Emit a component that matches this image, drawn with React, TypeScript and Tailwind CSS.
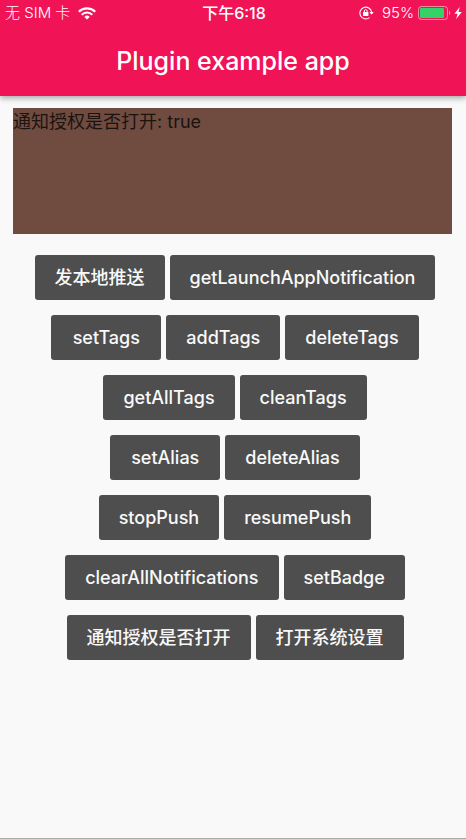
import React from "react";

const rows: string[][] = [
  ["发本地推送", "getLaunchAppNotification"],
  ["setTags", "addTags", "deleteTags"],
  ["getAllTags", "cleanTags"],
  ["setAlias", "deleteAlias"],
  ["stopPush", "resumePush"],
  ["clearAllNotifications", "setBadge"],
  ["通知授权是否打开", "打开系统设置"],
];

function WifiIcon() {
  return (
    <svg width="18" height="13" viewBox="0 0 18 13" fill="none" stroke="white" strokeWidth="2.1" aria-hidden="true">
      <path d="M0.8 4.8a11.6 11.6 0 0 1 16.4 0" />
      <path d="M3.7 7.7a7.5 7.5 0 0 1 10.6 0" />
      <path d="M9 12.6l-2.7-2.7a3.8 3.8 0 0 1 5.4 0z" fill="white" stroke="none" />
    </svg>
  );
}

function RotationLockIcon() {
  return (
    <svg width="15" height="14" viewBox="0 0 15 14" fill="none" stroke="white" aria-hidden="true">
      <path d="M10.5 11.6A5.9 5.9 0 1 1 12.6 6" strokeWidth="1.1" />
      <path d="M10.5 6h4.2l-2.1 2.8z" fill="white" stroke="none" />
      <rect x="4" y="6" width="5.4" height="4" rx="0.5" fill="white" stroke="none" />
      <path d="M5.3 6.4V5a1.4 1.4 0 0 1 2.8 0v1.4" strokeWidth="1" />
    </svg>
  );
}

function BatteryIcon() {
  return (
    <svg width="45" height="14" viewBox="0 0 45 14" aria-hidden="true">
      <rect x="0.5" y="0.5" width="29" height="13" rx="3" fill="none" stroke="white" strokeOpacity="0.5" />
      <rect x="2" y="2" width="24" height="10" rx="1" fill="#35d366" />
      <path d="M31 4.8c1.6.6 1.6 3.8 0 4.4z" fill="white" fillOpacity="0.5" />
      <path d="M41.8 1L36.4 7.8h3.3l-1.7 5.4 5.8-7.2h-3.3z" fill="white" />
    </svg>
  );
}

export default function App() {
  return (
    <div className="flex min-h-screen flex-col border-b border-[#a9a9a9] bg-[#f9f9f9] font-['Inter','Noto_Sans_CJK_SC',sans-serif]">
      <header className="bg-[#f01457] text-white shadow-[0_2px_6px_rgba(0,0,0,0.35)]">
        <div className="grid h-[26px] grid-cols-[1fr_auto_1fr] items-center pr-[3px] pl-[5px] text-[15px] leading-[20px]">
          <div className="flex items-center gap-2 font-light">
            <span>无 SIM 卡</span>
            <WifiIcon />
          </div>
          <span className="text-base leading-[20px] font-medium">下午6:18</span>
          <div className="flex items-center justify-end">
            <RotationLockIcon />
            <span className="mr-1 ml-2 font-light">95%</span>
            <BatteryIcon />
          </div>
        </div>
        <h1 className="flex h-[70px] items-center justify-center pt-0.5 text-[25px] font-medium">Plugin example app</h1>
      </header>
      <main className="pt-3 pr-[14px] pl-[13px]">
        <p className="h-[126px] bg-[#704c40] text-lg leading-[28px] text-[#1c1310]">通知授权是否打开: true</p>
        <div className="flex flex-col gap-[15px] pt-[21px] pl-[5px]">
          {rows.map((row) => (
            <div key={row[0]} className="flex justify-center gap-[5px]">
              {row.map((label) => (
                <button
                  key={label}
                  type="button"
                  className="h-[45px] min-w-[110px] rounded-[3px] bg-[#4e4e4e] px-5 text-lg font-medium whitespace-nowrap text-[#f9f9f9]"
                >
                  {label}
                </button>
              ))}
            </div>
          ))}
        </div>
      </main>
    </div>
  );
}
